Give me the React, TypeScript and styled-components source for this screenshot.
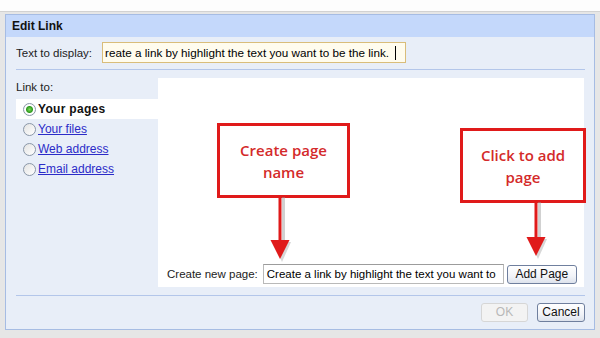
import styled, { createGlobalStyle } from "styled-components";

const GlobalStyle = createGlobalStyle`
  html, body {
    margin: 0;
    padding: 0;
    background: #e6e6e6;
    font-family: "Liberation Sans", Arial, sans-serif;
    font-size: 12px;
    color: #000;
  }
`

const navItems = [
  { label: "Your pages", selected: true },
  { label: "Your files", selected: false },
  { label: "Web address", selected: false },
  { label: "Email address", selected: false },
]

function App() {
  return (
    <Page>
      <GlobalStyle />
      <TopStrip />
      <Frame>
        <Dialog>
          <Header>Edit Link</Header>
          <Body>
            <TextRow>
              <Label>Text to display:</Label>
              <DisplayInput>
                <InputText>reate a link by highlight the text you want to be the link.</InputText>
                <Caret />
              </DisplayInput>
            </TextRow>
            <Separator />
            <LinkSection>
              <NavColumn>
                <Label>Link to:</Label>
                <NavList>
                  {navItems.map((item) => (
                    <NavItem key={item.label} $selected={item.selected}>
                      <Radio $checked={item.selected} />
                      <NavText $selected={item.selected}>{item.label}</NavText>
                    </NavItem>
                  ))}
                </NavList>
              </NavColumn>
              <Panel>
                <Callout $left={59} $top={45} $width={133}>
                  Create page
                  <br />
                  name
                </Callout>
                <Arrow $left={112} $top={117} $height={64} />
                <Callout $left={302} $top={50} $width={126}>
                  Click to add
                  <br />
                  page
                </Callout>
                <Arrow $left={368} $top={122} $height={56} />
                <CreateRow>
                  <Label>Create new page:</Label>
                  <PageInput>Create a link by highlight the text you want to</PageInput>
                  <Button $width={70}>Add Page</Button>
                </CreateRow>
              </Panel>
            </LinkSection>
            <Separator $gap={8} />
            <Footer>
              <Button $disabled $width={47}>OK</Button>
              <Button $width={48}>Cancel</Button>
            </Footer>
          </Body>
        </Dialog>
      </Frame>
    </Page>
  )
}

export default App;


interface ArrowProps {
  $left: number;
  $top: number;
  $height: number;
}

function Arrow({ $left, $top, $height }: ArrowProps) {
  const stemEnd = $height - 19
  return (
    <ArrowBox $left={$left} $top={$top} width={22} height={$height + 4}>
      <rect x={12} y={2} width={3} height={stemEnd} fill="#9a9a9a" opacity={0.45} />
      <polygon points={`3,${stemEnd + 2} 21,${stemEnd + 2} 12,${$height + 3}`} fill="#9a9a9a" opacity={0.4} />
      <rect x={8.5} y={0} width={3} height={stemEnd} fill="#e01a1a" />
      <polygon points={`0.5,${stemEnd} 19.5,${stemEnd} 10,${$height}`} fill="#e01a1a" />
    </ArrowBox>
  )
}


const Page = styled.div`
  width: 600px;
  height: 338px;
  overflow: hidden;
  background: #e6e6e6;
`

const TopStrip = styled.div`
  height: 11px;
  background: #fdfdfd;
  border-bottom: 1px solid #d2d2d2;
`

const Frame = styled.div`
  padding: 2px 5px 0;
`

const Dialog = styled.div`
  width: 588px;
  height: 314px;
  border: 1px solid #a6bce3;
  background: #e8eef8;
  display: flex;
  flex-direction: column;
`

const Header = styled.div`
  height: 22px;
  line-height: 23px;
  padding-left: 6px;
  background: #c4d8fb;
  font-weight: 700;
  font-size: 12px;
  color: #111;
`

const Body = styled.div`
  padding: 0 9px 0 10px;
  display: flex;
  flex-direction: column;
`

const Label = styled.span`
  flex-shrink: 0;
  font-size: 11.5px;
  color: #222;
  white-space: nowrap;
`

const TextRow = styled.div`
  margin-top: 5px;
  height: 21px;
  display: flex;
  align-items: center;
  gap: 10px;
`

const DisplayInput = styled.div`
  width: 300px;
  height: 19px;
  padding-left: 2px;
  display: flex;
  align-items: center;
  border: 1px solid #d9bd7a;
  background: #fffcee;
  overflow: hidden;
`

const InputText = styled.span`
  font-size: 11.7px;
  white-space: nowrap;
`

const Caret = styled.span`
  flex-shrink: 0;
  width: 1px;
  height: 14px;
  margin-left: 6px;
  background: #000;
`

const Separator = styled.div<{ $gap?: number }>`
  height: 1px;
  margin-top: ${({ $gap }) => $gap ?? 6}px;
  background: #b3c6ea;
`

const LinkSection = styled.div`
  display: flex;
  margin-top: 8px;
`

const NavColumn = styled.div`
  width: 142px;
  padding-top: 3px;
  display: flex;
  flex-direction: column;
`

const NavList = styled.div`
  margin-top: 6px;
  display: flex;
  flex-direction: column;
`

const NavItem = styled.div<{ $selected: boolean }>`
  height: 20px;
  display: flex;
  align-items: center;
  gap: 2px;
  padding-left: 7px;
  background: ${({ $selected }) => ($selected ? "#ffffff" : "transparent")};
`

const Radio = styled.span<{ $checked: boolean }>`
  width: 11px;
  height: 11px;
  border-radius: 50%;
  border: 1px solid #8a97a8;
  background: ${({ $checked }) =>
    $checked
      ? "radial-gradient(circle, #7fdc5c 0, #2f9a1e 3px, #ffffff 4px, #f1f1f1 100%)"
      : "linear-gradient(135deg, #e3e3e3, #ffffff)"};
`

const NavText = styled.span<{ $selected: boolean }>`
  font-size: 12px;
  font-weight: ${({ $selected }) => ($selected ? 700 : 400)};
  color: ${({ $selected }) => ($selected ? "#111" : "#2b2bc8")};
  text-decoration: ${({ $selected }) => ($selected ? "none" : "underline")};
  letter-spacing: ${({ $selected }) => ($selected ? "0.3px" : "0")};
  cursor: pointer;
`

const Panel = styled.div`
  position: relative;
  width: 426px;
  height: 209px;
  background: #ffffff;
  display: flex;
  align-items: flex-end;
`

const Callout = styled.div<{ $left: number; $top: number; $width: number }>`
  position: absolute;
  left: ${({ $left }) => $left}px;
  top: ${({ $top }) => $top}px;
  width: ${({ $width }) => $width - 6}px;
  height: 69px;
  border: 3px solid #e01a1a;
  display: flex;
  align-items: center;
  justify-content: center;
  text-align: center;
  font-family: "Open Sans", "Liberation Sans", sans-serif;
  font-weight: 600;
  font-size: 15px;
  line-height: 22px;
  color: #d42a2a;
`

const ArrowBox = styled.svg<{ $left: number; $top: number }>`
  position: absolute;
  left: ${({ $left }) => $left}px;
  top: ${({ $top }) => $top}px;
`

const CreateRow = styled.div`
  width: 100%;
  padding: 0 7px 3px 9px;
  display: flex;
  align-items: center;
  gap: 5px;
`

const PageInput = styled.div`
  flex-shrink: 0;
  width: 236px;
  height: 18px;
  padding-left: 3px;
  line-height: 18px;
  border: 1px solid #b9b9b9;
  border-top-color: #9c9c9c;
  font-size: 11.5px;
  white-space: nowrap;
  overflow: hidden;
  margin-right: -2px;
`

const Button = styled.div<{ $disabled?: boolean; $width?: number }>`
  flex-shrink: 0;
  width: ${({ $width }) => ($width ? `${$width - 2}px` : "auto")};
  height: 17px;
  line-height: 17px;
  text-align: center;
  white-space: nowrap;
  border-radius: 3px;
  border: 1px solid ${({ $disabled }) => ($disabled ? "#d6d6d6" : "#6f7f9e")};
  background: ${({ $disabled }) =>
    $disabled ? "#f3f3f3" : "linear-gradient(#ffffff, #f1f3f8 60%, #dde2ec)"};
  font-size: 12px;
  color: ${({ $disabled }) => ($disabled ? "#b8b8b8" : "#111")};
  cursor: pointer;
`

const Footer = styled.div`
  margin-top: 7px;
  display: flex;
  justify-content: flex-end;
  gap: 9px;
`
